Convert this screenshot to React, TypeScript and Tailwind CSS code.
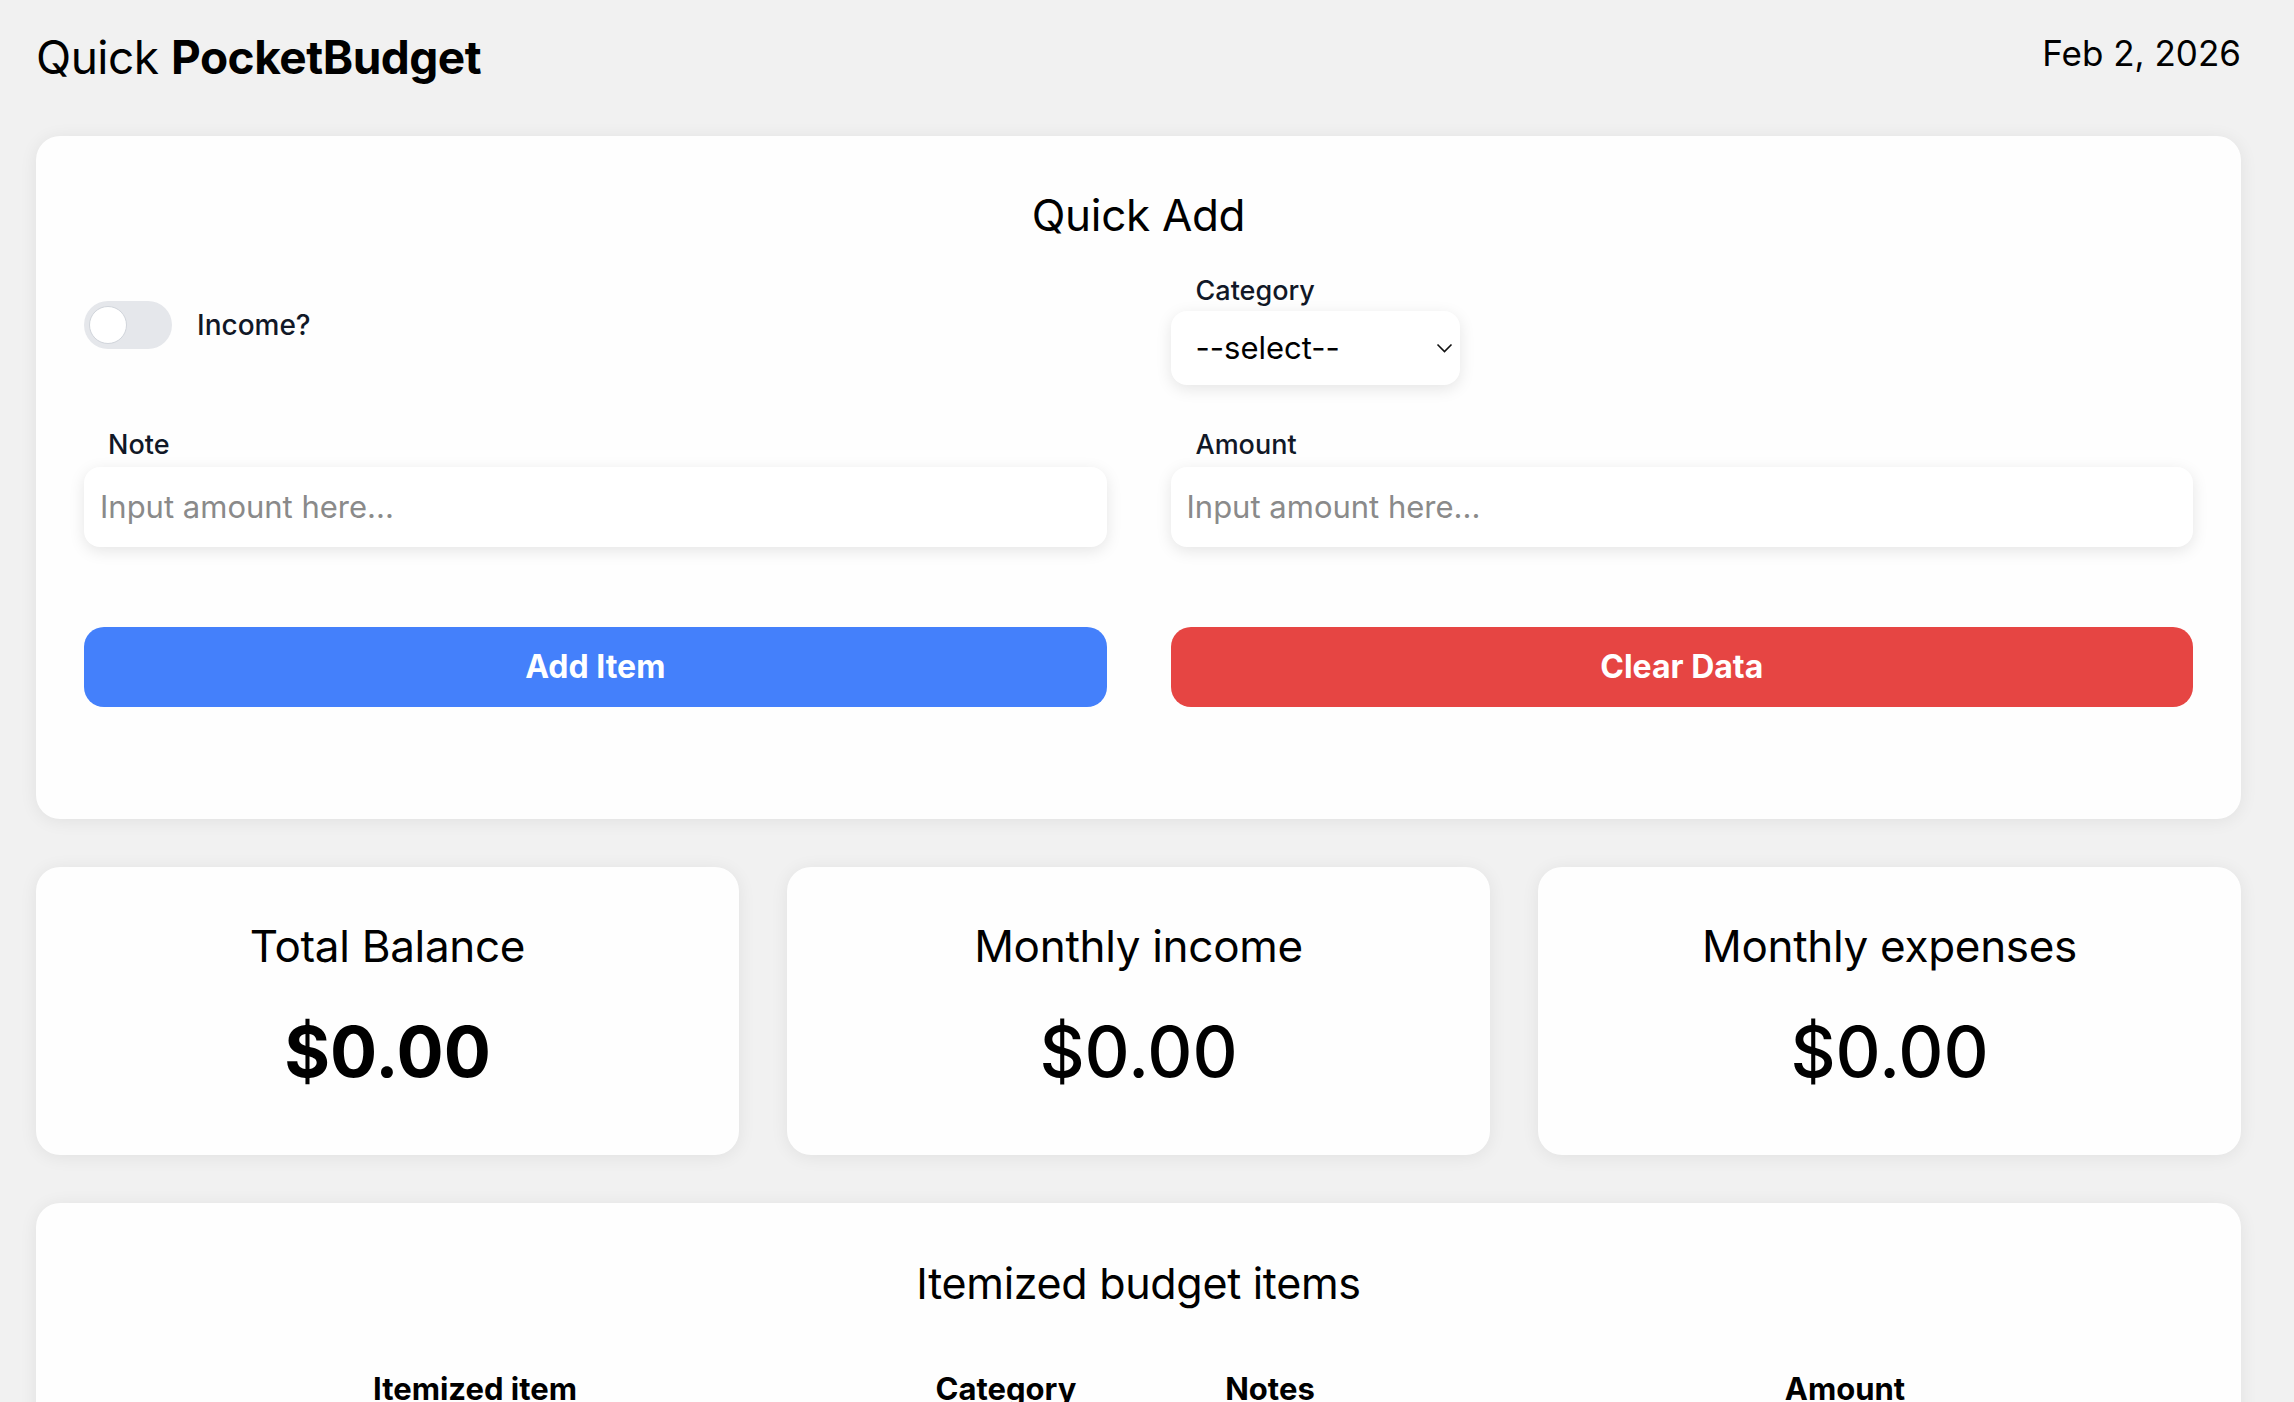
import { useState } from "react";

const font = { fontFamily: "Inter, 'Noto Sans', sans-serif" };

function Toggle({ on, onChange }: { on: boolean; onChange: (v: boolean) => void }) {
  return (
    <button
      onClick={() => onChange(!on)}
      className={`w-[88px] h-[48px] rounded-full flex items-center px-[5px] transition-colors ${
        on ? "bg-[#4480fb] justify-end" : "bg-[#e5e7eb] justify-start"
      }`}
    >
      <span className="w-[38px] h-[38px] rounded-full bg-white border border-[#d1d5db]" />
    </button>
  );
}

function StatCard({ title, value, bold }: { title: string; value: string; bold?: boolean }) {
  return (
    <div className="bg-[#fefefe] rounded-3xl shadow-[0_2px_18px_rgba(0,0,0,0.07)] h-[288px] flex flex-col items-center pt-[53px]">
      <h3 className="text-[44px] leading-[1.2] tracking-[-0.3px] text-black">{title}</h3>
      <p className={`mt-[37px] text-[70px] leading-[1.2] text-black ${bold ? "font-bold" : "font-medium"}`}>
        {value}
      </p>
    </div>
  );
}

export default function App() {
  const [income, setIncome] = useState(false);

  return (
    <div className="min-h-screen bg-[#f1f1f1] text-black" style={font}>
      <div className="w-[2205px] ml-[36px] pb-10">
        {/* Header */}
        <header className="flex justify-between items-start pt-[30px]">
          <h1 className="text-[46px] leading-[1.2] tracking-[-0.5px]">
            Quick <span className="font-bold">PocketBudget</span>
          </h1>
          <span className="text-[35px] leading-[1.2] mt-[2px]">Feb 2, 2026</span>
        </header>

        {/* Quick Add */}
        <section className="mt-[51px] bg-[#fefefe] rounded-3xl shadow-[0_2px_18px_rgba(0,0,0,0.07)] px-[48px] pt-[53px] pb-[112px]">
          <h2 className="text-center text-[44px] leading-[1.2] tracking-[-0.3px]">Quick Add</h2>

          <div className="grid grid-cols-2 gap-x-[64px] mt-[29px]">
            <div className="flex items-center gap-[25px] pb-[6px]">
              <Toggle on={income} onChange={setIncome} />
              <span className="text-[28px] font-medium text-[#111827]">Income?</span>
            </div>
            <div className="flex flex-col">
              <label className="pl-[25px] text-[27px] font-medium text-[#111827]">Category</label>
              <div className="relative w-[289px]">
                <select className="appearance-none w-full h-[74px] rounded-2xl bg-white shadow-[0_4px_16px_rgba(0,0,0,0.1)] pl-[25px] pr-10 text-[31px] text-black outline-none">
                  <option>--select--</option>
                  <option>Food</option>
                  <option>Rent</option>
                  <option>Transport</option>
                  <option>Other</option>
                </select>
                <svg
                  className="absolute right-[7px] top-[32px] pointer-events-none"
                  width="17"
                  height="10"
                  viewBox="0 0 17 10"
                  fill="none"
                >
                  <path d="M1.5 1.5 L8.5 8.5 L15.5 1.5" stroke="#111" strokeWidth="1.6" />
                </svg>
              </div>
            </div>

            <div className="flex flex-col mt-[40px]">
              <label className="pl-[24px] text-[27px] font-medium text-[#111827]">Note</label>
              <input
                placeholder="Input amount here..."
                className="mt-[1px] h-[80px] rounded-2xl bg-white shadow-[0_4px_16px_rgba(0,0,0,0.1)] px-4 text-[31px] outline-none placeholder:text-[#8a8a8a]"
              />
            </div>
            <div className="flex flex-col mt-[40px]">
              <label className="pl-[25px] text-[27px] font-medium text-[#111827]">Amount</label>
              <input
                placeholder="Input amount here..."
                className="mt-[1px] h-[80px] rounded-2xl bg-white shadow-[0_4px_16px_rgba(0,0,0,0.1)] px-4 text-[31px] outline-none placeholder:text-[#8a8a8a]"
              />
            </div>

            <button className="mt-[80px] h-[80px] rounded-[20px] bg-[#4480fb] text-white text-[32px] font-bold">
              Add Item
            </button>
            <button className="mt-[80px] h-[80px] rounded-[20px] bg-[#e64543] text-white text-[32px] font-bold">
              Clear Data
            </button>
          </div>
        </section>

        {/* Stats */}
        <div className="grid grid-cols-3 gap-[48px] mt-[48px]">
          <StatCard title="Total Balance" value="$0.00" bold />
          <StatCard title="Monthly income" value="$0.00" />
          <StatCard title="Monthly expenses" value="$0.00" />
        </div>

        {/* Itemized */}
        <section className="mt-[48px] bg-[#fefefe] rounded-3xl shadow-[0_2px_18px_rgba(0,0,0,0.07)] px-[48px] pt-[55px] pb-16">
          <h2 className="text-center text-[43px] leading-[1.2] tracking-[-0.3px]">Itemized budget items</h2>
          <div className="grid grid-cols-[782px_280px_248px_103px_1fr] mt-[56px] text-center text-[31px] font-bold">
            <span>Itemized item</span>
            <span>Category</span>
            <span>Notes</span>
            <span />
            <span>Amount</span>
          </div>
        </section>
      </div>
    </div>
  );
}
